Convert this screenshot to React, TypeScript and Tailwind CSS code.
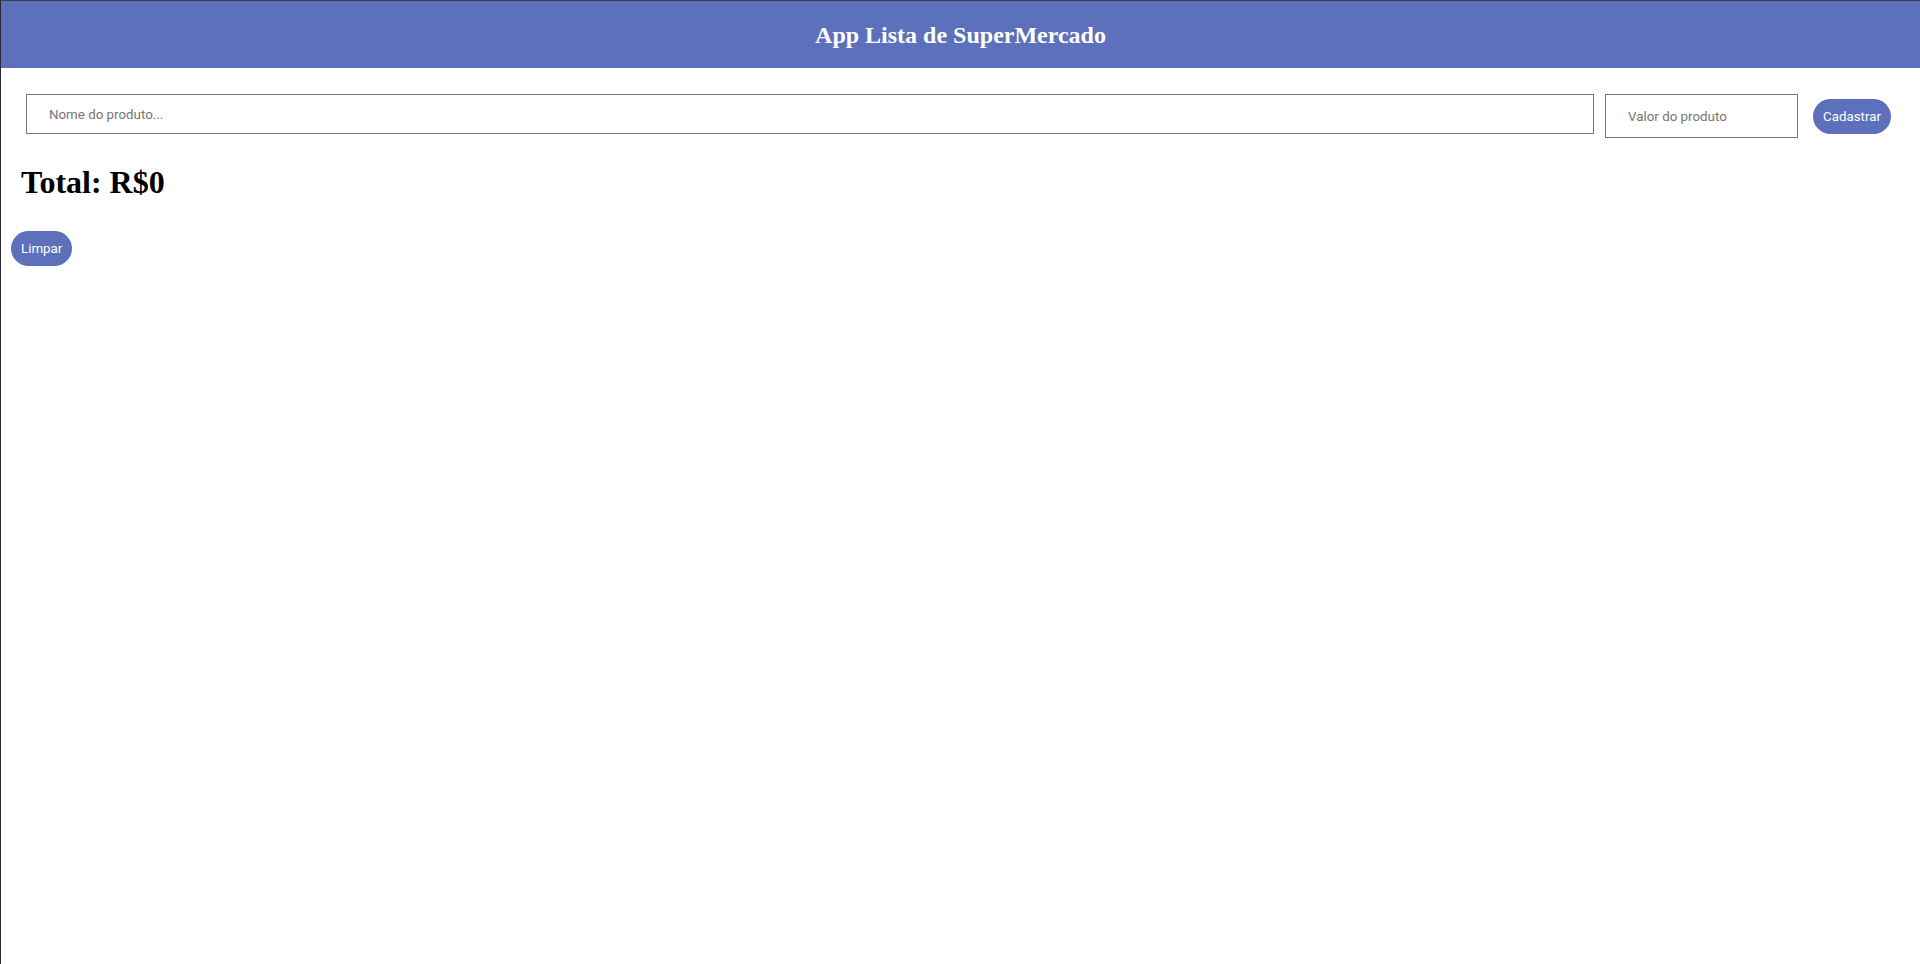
const inputCls =
  "h-full border border-[#767676] bg-white pl-[22px] text-[13.33px] text-black outline-none placeholder:text-[#757575]";

const btnCls =
  "h-[35px] rounded-full bg-[#5c70bb] px-[10px] text-[13.33px] text-white";

export default function App() {
  return (
    <div className="min-h-screen border-l border-t border-l-[#2a2636] border-t-[#3c3c3c] bg-white font-['Roboto',sans-serif]">
      <header className="flex h-[67px] items-center justify-center bg-[#5c70bb]">
        <h2 className="font-['Liberation_Serif',serif] text-[24px] font-bold text-white">
          App Lista de SuperMercado
        </h2>
      </header>

      <div className="mt-[26px] flex items-start pl-[25px] pr-[29px]">
        <div className="h-[40px] flex-1">
          <input type="text" placeholder="Nome do produto..." className={inputCls + " w-full"} />
        </div>
        <div className="ml-[11px] h-[44px] w-[193px]">
          <input type="text" placeholder="Valor do produto" className={inputCls + " w-full"} />
        </div>
        <button className={btnCls + " ml-[15px] mt-[5px]"}>Cadastrar</button>
      </div>

      <h1 className="mt-[26px] pl-[20px] font-['Liberation_Serif',serif] text-[32px] font-bold leading-[36px] text-black">
        Total: R$0
      </h1>

      <button className={btnCls + " ml-[10px] mt-[31px]"}>Limpar</button>
    </div>
  );
}
